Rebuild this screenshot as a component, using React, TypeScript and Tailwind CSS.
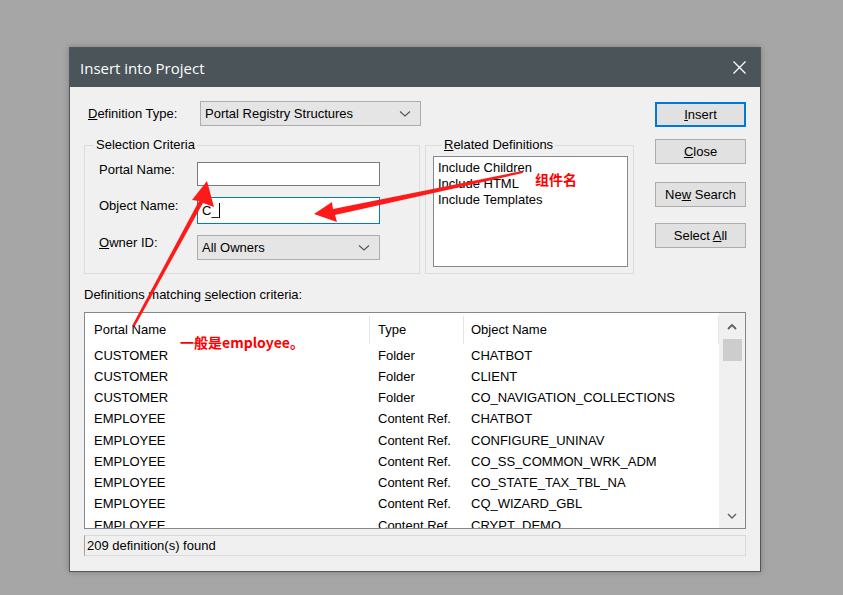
import React from "react";

const rows = [
  ["CUSTOMER", "Folder", "CHATBOT"],
  ["CUSTOMER", "Folder", "CLIENT"],
  ["CUSTOMER", "Folder", "CO_NAVIGATION_COLLECTIONS"],
  ["EMPLOYEE", "Content Ref.", "CHATBOT"],
  ["EMPLOYEE", "Content Ref.", "CONFIGURE_UNINAV"],
  ["EMPLOYEE", "Content Ref.", "CO_SS_COMMON_WRK_ADM"],
  ["EMPLOYEE", "Content Ref.", "CO_STATE_TAX_TBL_NA"],
  ["EMPLOYEE", "Content Ref.", "CQ_WIZARD_GBL"],
  ["EMPLOYEE", "Content Ref.", "CRYPT_DEMO"],
];

const Chevron = () => (
  <svg width="12" height="8" viewBox="0 0 12 8" className="shrink-0">
    <path d="M1 1.5 L6 6 L11 1.5" fill="none" stroke="#555" strokeWidth="1.1" />
  </svg>
);

const Combo = ({ text, w }: { text: string; w: string }) => (
  <div
    className={`${w} h-[25px] flex items-center justify-between pl-[4px] pr-[9px] bg-[#e5e5e5] border border-[#adadad]`}
  >
    <span>{text}</span>
    <Chevron />
  </div>
);

const Btn = ({ children, focus }: { children: React.ReactNode; focus?: boolean }) => (
  <div
    className={`w-[91px] h-[25px] flex items-center justify-center bg-[#e1e1e1] ${
      focus ? "border-2 border-[#0078d7]" : "border border-[#adadad]"
    }`}
  >
    <span className="whitespace-pre">{children}</span>
  </div>
);

export default function App() {
  return (
    <div
      className="relative w-[843px] h-[595px] bg-[#a6a6a6] pt-[47px] pl-[69px] text-[13px] leading-[16px] text-black overflow-hidden"
      style={{ fontFamily: '"Liberation Sans", Arial, sans-serif' }}
    >
      {/* window */}
      <div className="w-[692px] h-[525px] flex flex-col bg-[#f0f0f0] border border-[#4e585e] shadow-[0_0_6px_rgba(0,0,0,0.25)]">
        {/* title bar */}
        <div className="h-[39px] shrink-0 flex items-center justify-between bg-[#4a5459] pl-[10px] pr-[14px]">
          <span
            className="text-white text-[15px]"
            style={{ fontFamily: '"Open Sans", "Noto Sans", sans-serif' }}
          >
            Insert into Project
          </span>
          <svg width="13" height="13" viewBox="0 0 13 13">
            <path d="M0.5 0.5 L12.5 12.5 M12.5 0.5 L0.5 12.5" stroke="#fff" strokeWidth="1.3" />
          </svg>
        </div>

        {/* body */}
        <div className="flex flex-col pl-[14px] pr-[14px] pt-[14px]">
          <div className="flex">
            {/* left column */}
            <div className="w-[550px] flex flex-col">
              <div className="flex items-center h-[25px]">
                <span className="w-[116px] pl-[4px]">
                  <u>D</u>efinition Type:
                </span>
                <Combo text="Portal Registry Structures" w="w-[221px]" />
              </div>

              <div className="flex mt-[11px] h-[137px]">
                <fieldset className="w-[336px] h-full border border-[#dcdcdc]">
                  <legend className="ml-[9px] px-[2px]">Selection Criteria</legend>
                  <div className="flex flex-col pl-[14px] pt-[9px]">
                    <div className="flex items-start h-[24px]">
                      <span className="w-[98px]">Portal Name:</span>
                      <div className="w-[183px] h-[24px] bg-white border border-[#7a7a7a]" />
                    </div>
                    <div className="flex items-start h-[27px] mt-[11px]">
                      <span className="w-[98px] pt-px">Object Name:</span>
                      <div className="w-[183px] h-[27px] bg-white border border-[#0078d7] flex items-center pl-[4px]">
                        <span>C_</span>
                        <span className="w-px h-[15px] bg-black" />
                      </div>
                    </div>
                    <div className="flex items-start h-[25px] mt-[11px]">
                      <span className="w-[98px]">
                        <u>O</u>wner ID:
                      </span>
                      <Combo text="All Owners" w="w-[183px]" />
                    </div>
                  </div>
                </fieldset>

                <fieldset className="w-[209px] h-full ml-[5px] border border-[#dcdcdc] pl-[7px]">
                  <legend className="ml-[9px] px-[2px]">
                    <u>R</u>elated Definitions
                  </legend>
                  <div className="w-[195px] h-[111px] mt-[3px] bg-white border border-[#828790] pl-[4px] pt-[3px] flex flex-col">
                    <span>Include Children</span>
                    <span>Include HTML</span>
                    <span>Include Templates</span>
                  </div>
                </fieldset>
              </div>
            </div>

            {/* buttons */}
            <div className="ml-[21px] flex flex-col pt-[1px]">
              <Btn focus>
                <u>I</u>nsert
              </Btn>
              <div className="mt-[12px]">
                <Btn>
                  <u>C</u>lose
                </Btn>
              </div>
              <div className="mt-[18px]">
                <Btn>
                  Ne<u>w</u> Search
                </Btn>
              </div>
              <div className="mt-[16px]">
                <Btn>
                  Select <u>A</u>ll
                </Btn>
              </div>
            </div>
          </div>

          <div className="mt-[13px]">
            Definitions matching <u>s</u>election criteria:
          </div>

          {/* list view */}
          <div className="mt-[9px] w-[662px] h-[217px] flex bg-white border border-[#828790] overflow-hidden">
            <div className="flex-1 flex flex-col">
              <div className="h-[32px] shrink-0 flex">
                <div className="w-[284px] pl-[9px] flex items-center pt-[1px]">Portal Name</div>
                <div className="w-[94px] flex items-center pt-[1px]">
                  <span className="w-px h-[28px] bg-[#e5e5e5] mr-[8px]" />
                  Type
                </div>
                <div className="w-[255px] flex items-center pt-[1px]">
                  <span className="w-px h-[28px] bg-[#e5e5e5] mr-[7px]" />
                  Object Name
                </div>
                <div className="flex items-center pt-[1px]">
                  <span className="w-px h-[28px] bg-[#e5e5e5]" />
                </div>
              </div>
              {rows.map((r, i) => (
                <div key={i} className="h-[21.25px] shrink-0 flex items-center">
                  <div className="w-[284px] pl-[9px]">{r[0]}</div>
                  <div className="w-[94px] pl-[9px]">{r[1]}</div>
                  <div className="w-[255px] pl-[8px]">{r[2]}</div>
                </div>
              ))}
            </div>
            {/* scrollbar */}
            <div className="w-[26px] shrink-0 bg-[#f0f0f0] flex flex-col items-center">
              <div className="h-[26px] flex items-center justify-center">
                <svg width="10" height="7" viewBox="0 0 10 7">
                  <path d="M1 6 L5 2 L9 6" fill="none" stroke="#606060" strokeWidth="1.8" />
                </svg>
              </div>
              <div className="w-[19px] h-[22px] bg-[#cdcdcd]" />
              <div className="flex-1" />
              <div className="h-[24px] flex items-center justify-center">
                <svg width="10" height="7" viewBox="0 0 10 7">
                  <path d="M1 1 L5 5 L9 1" fill="none" stroke="#606060" strokeWidth="1.4" />
                </svg>
              </div>
            </div>
          </div>

          {/* status bar */}
          <div className="mt-[6px] w-[662px] h-[21px] flex items-center pl-[2px] border border-[#dadada] border-l-[#a0a0a0]">
            209 definition(s) found
          </div>
        </div>
      </div>

      {/* red annotations */}
      <svg className="absolute left-0 top-0" width="843" height="595" viewBox="0 0 843 595">
        <polygon points="207,181 192,200 199,201 132,326 135,326 203,203 214,207" fill="#ff1a1a" />
        <polygon points="314,214 332,202 333,209 522,171 523,173 335,215 337,222" fill="#ff1a1a" />
      </svg>
      <div
        className="absolute left-[535px] top-[170px] text-[14px] leading-[18px] font-bold text-[#ff0000]"
        style={{ fontFamily: '"Noto Sans CJK SC", sans-serif' }}
      >
        组件名
      </div>
      <div
        className="absolute left-[180px] top-[333px] text-[14px] leading-[18px] font-bold text-[#ff0000]"
        style={{ fontFamily: '"Noto Sans CJK SC", sans-serif' }}
      >
        一般是employee。
      </div>
    </div>
  );
}
